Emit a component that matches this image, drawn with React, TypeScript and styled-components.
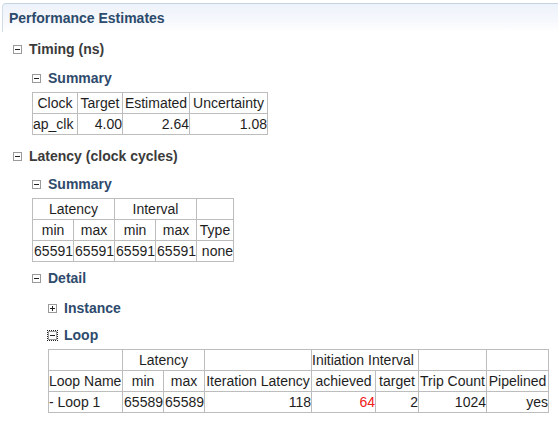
import React from "react";
import styled, { createGlobalStyle } from "styled-components";

const Global = createGlobalStyle`
  html, body { margin: 0; padding: 0; background: #ffffff; }
  body { font-family: "Liberation Sans", Arial, sans-serif; color: #1a1a1a; }
`;

const Page = styled.div`
  width: 558px;
  height: 422px;
  overflow: hidden;
  padding-top: 3px;
  box-sizing: border-box;
`;

const TitleBar = styled.div`
  margin-left: 2px;
  height: 29px;
  border-top: 1px solid #c6d3e1;
  border-left: 1px solid #d3dde8;
  border-top-left-radius: 4px;
  background: linear-gradient(to bottom, #edf2fa 0%, #f6f8fc 60%, #ffffff 100%);
  display: flex;
  align-items: center;
  padding-left: 6px;
  box-sizing: border-box;
  font-weight: 700;
  font-size: 14px;
  color: #2b4a6c;
`;

const Node = styled.div<{ $indent: number; $top: number }>`
  margin-left: ${(p) => p.$indent}px;
  margin-top: ${(p) => p.$top}px;
`;

const NodeHead = styled.div<{ $tone: "gray" | "blue" }>`
  display: flex;
  align-items: center;
  height: 20px;
  gap: 6px;
  font-weight: 700;
  font-size: 14px;
  color: ${(p) => (p.$tone === "gray" ? "#3b3b3b" : "#2e4a6c")};
`;

const IconWrap = styled.span<{ $focus?: boolean }>`
  display: inline-flex;
  width: 11px;
  height: 11px;
  align-items: center;
  justify-content: center;
  box-sizing: border-box;
  margin-left: -1px;
  border: 1px ${(p) => (p.$focus ? "dotted #222" : "solid transparent")};
`;

const Toggle = ({ open, focus }: { open: boolean; focus?: boolean }) => (
  <IconWrap $focus={focus}>
    <svg width="9" height="9" viewBox="0 0 9 9">
      <rect x="0.5" y="0.5" width="8" height="8" fill="#fff" stroke="#9a9a9a" />
      <line x1="2" y1="4.5" x2="7" y2="4.5" stroke="#222" />
      {!open && <line x1="4.5" y1="2" x2="4.5" y2="7" stroke="#222" />}
    </svg>
  </IconWrap>
);

const Table = styled.table<{ $top: number }>`
  border-collapse: collapse;
  table-layout: fixed;
  margin-top: ${(p) => p.$top}px;
  font-size: 14px;
  color: #1e1e1e;
`;

const Cell = styled.td<{ $align?: "left" | "right" | "center" }>`
  border: 1px solid #bdbdbd;
  padding: 0;
  line-height: 20px;
  white-space: nowrap;
  overflow: visible;
  text-align: ${(p) => p.$align ?? "center"};
`;

const Red = styled.span`
  color: #f02020;
`;

const Col = styled.col``;

export default function App() {
  return (
    <Page>
      <Global />
      <TitleBar>Performance Estimates</TitleBar>

      <Node $indent={13} $top={7}>
        <NodeHead $tone="gray">
          <Toggle open />
          Timing (ns)
        </NodeHead>
        <Node $indent={19} $top={9}>
          <NodeHead $tone="blue">
            <Toggle open />
            Summary
          </NodeHead>
          <Table $top={4}>
            <colgroup>
              <Col style={{ width: 45 }} />
              <Col style={{ width: 45 }} />
              <Col style={{ width: 67 }} />
              <Col style={{ width: 78 }} />
            </colgroup>
            <tbody>
              <tr>
                <Cell>Clock</Cell>
                <Cell>Target</Cell>
                <Cell>Estimated</Cell>
                <Cell>Uncertainty</Cell>
              </tr>
              <tr>
                <Cell $align="left">ap_clk</Cell>
                <Cell $align="right">4.00</Cell>
                <Cell $align="right">2.64</Cell>
                <Cell $align="right">1.08</Cell>
              </tr>
            </tbody>
          </Table>
        </Node>
      </Node>

      <Node $indent={13} $top={11}>
        <NodeHead $tone="gray">
          <Toggle open />
          Latency (clock cycles)
        </NodeHead>
        <Node $indent={19} $top={8}>
          <NodeHead $tone="blue">
            <Toggle open />
            Summary
          </NodeHead>
          <Table $top={4}>
            <colgroup>
              <Col style={{ width: 41 }} />
              <Col style={{ width: 41 }} />
              <Col style={{ width: 41 }} />
              <Col style={{ width: 41 }} />
              <Col style={{ width: 37 }} />
            </colgroup>
            <tbody>
              <tr>
                <Cell colSpan={2}>Latency</Cell>
                <Cell colSpan={2}>Interval</Cell>
                <Cell />
              </tr>
              <tr>
                <Cell>min</Cell>
                <Cell>max</Cell>
                <Cell>min</Cell>
                <Cell>max</Cell>
                <Cell>Type</Cell>
              </tr>
              <tr>
                <Cell $align="right">65591</Cell>
                <Cell $align="right">65591</Cell>
                <Cell $align="right">65591</Cell>
                <Cell $align="right">65591</Cell>
                <Cell $align="right">none</Cell>
              </tr>
            </tbody>
          </Table>
        </Node>

        <Node $indent={19} $top={6}>
          <NodeHead $tone="blue">
            <Toggle open />
            Detail
          </NodeHead>
          <Node $indent={16} $top={10}>
            <NodeHead $tone="blue">
              <Toggle open={false} />
              Instance
            </NodeHead>
          </Node>
          <Node $indent={16} $top={7}>
            <NodeHead $tone="blue">
              <Toggle open focus />
              Loop
            </NodeHead>
            <Table $top={4}>
              <colgroup>
                <Col style={{ width: 74 }} />
                <Col style={{ width: 41 }} />
                <Col style={{ width: 41 }} />
                <Col style={{ width: 107 }} />
                <Col style={{ width: 64 }} />
                <Col style={{ width: 43 }} />
                <Col style={{ width: 68 }} />
                <Col style={{ width: 62 }} />
              </colgroup>
              <tbody>
                <tr>
                  <Cell />
                  <Cell colSpan={2}>Latency</Cell>
                  <Cell />
                  <Cell colSpan={2} $align="left">Initiation Interval</Cell>
                  <Cell />
                  <Cell />
                </tr>
                <tr>
                  <Cell $align="left">Loop Name</Cell>
                  <Cell>min</Cell>
                  <Cell>max</Cell>
                  <Cell>Iteration Latency</Cell>
                  <Cell>achieved</Cell>
                  <Cell>target</Cell>
                  <Cell>Trip Count</Cell>
                  <Cell>Pipelined</Cell>
                </tr>
                <tr>
                  <Cell $align="left">- Loop 1</Cell>
                  <Cell $align="right">65589</Cell>
                  <Cell $align="right">65589</Cell>
                  <Cell $align="right">118</Cell>
                  <Cell $align="right"><Red>64</Red></Cell>
                  <Cell $align="right">2</Cell>
                  <Cell $align="right">1024</Cell>
                  <Cell $align="right">yes</Cell>
                </tr>
              </tbody>
            </Table>
          </Node>
        </Node>
      </Node>
    </Page>
  );
}
